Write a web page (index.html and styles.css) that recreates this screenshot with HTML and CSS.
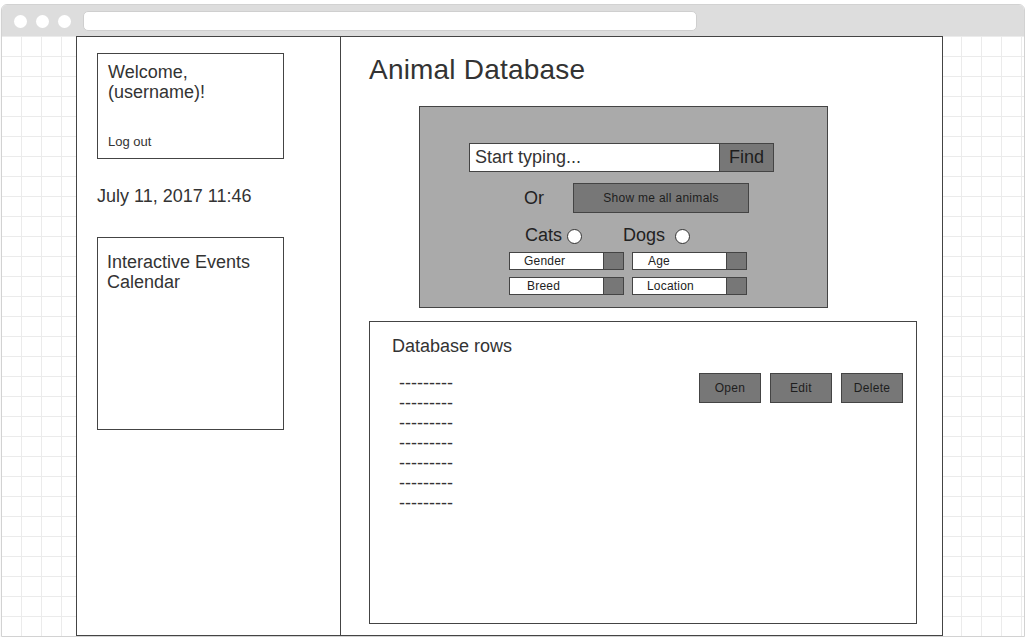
FILE: index.html
```html
<!DOCTYPE html>
<html lang="en">
<head>
<meta charset="utf-8">
<title>Animal Database</title>
<link rel="stylesheet" href="styles.css">
</head>
<body>
<div class="window">
  <div class="chrome">
    <span class="dot"></span><span class="dot"></span><span class="dot"></span>
    <div class="url"></div>
  </div>
  <div class="viewport">
    <div class="page">
      <aside class="sidebar">
        <div class="welcome">
          <div class="welcome-text">Welcome,<br>(username)!</div>
          <a class="logout">Log out</a>
        </div>
        <div class="date">July 11, 2017 11:46</div>
        <div class="calendar">Interactive Events Calendar</div>
      </aside>
      <main class="content">
        <h1 class="title">Animal Database</h1>
        <section class="search-panel">
          <div class="search-row">
            <div class="search-input">Start typing...</div>
            <div class="find-btn">Find</div>
          </div>
          <div class="or-row">
            <span class="or">Or</span>
            <div class="btn show-all">Show me all animals</div>
          </div>
          <div class="species-row">
            <span class="cats">Cats</span><span class="radio radio-cats"></span>
            <span class="dogs">Dogs</span><span class="radio radio-dogs"></span>
          </div>
          <div class="filters">
            <div class="select"><span class="select-label">Gender</span><span class="select-arrow"></span></div>
            <div class="select"><span class="select-label label-age">Age</span><span class="select-arrow"></span></div>
            <div class="select"><span class="select-label label-breed">Breed</span><span class="select-arrow"></span></div>
            <div class="select"><span class="select-label label-location">Location</span><span class="select-arrow"></span></div>
          </div>
        </section>
        <section class="rows-panel">
          <h2 class="rows-title">Database rows</h2>
          <div class="rows-body">
            <ul class="rows">
              <li>---------</li>
              <li>---------</li>
              <li>---------</li>
              <li>---------</li>
              <li>---------</li>
              <li>---------</li>
              <li>---------</li>
            </ul>
            <div class="row-actions">
              <div class="btn action">Open</div>
              <div class="btn action">Edit</div>
              <div class="btn action">Delete</div>
            </div>
          </div>
        </section>
      </main>
    </div>
  </div>
</div>
</body>
</html>
```
FILE: styles.css
```css
* { box-sizing: border-box; }

html, body {
  margin: 0;
  padding: 0;
  background: #ffffff;
}

body {
  font-family: "Liberation Sans", Arial, sans-serif;
  color: #333333;
  overflow: hidden;
}

.window {
  margin: 4px 0 0 1px;
  width: 1024px;
  border: 1px solid #d2d2d2;
  border-radius: 6px 6px 0 0;
  overflow: hidden;
  box-shadow: 0 2px 2px #ececec;
}

.chrome {
  height: 31px;
  background: #dddddd;
  display: flex;
  align-items: center;
  padding-left: 12px;
  padding-top: 1px;
}

.dot {
  width: 13px;
  height: 13px;
  border-radius: 50%;
  background: #ffffff;
  margin-right: 9px;
}

.url {
  margin-left: 3px;
  width: 614px;
  height: 20px;
  background: #ffffff;
  border: 1px solid #cfcfcf;
  border-radius: 5px;
  margin-top: -1px;
}

.viewport {
  height: 600px;
  background-color: #ffffff;
  background-image:
    linear-gradient(to right, #ebebeb 1px, transparent 1px),
    linear-gradient(to bottom, #ebebeb 1px, transparent 1px);
  background-size: 20px 20px;
  background-position: 19px 0;
}

.page {
  margin-left: 74px;
  width: 867px;
  height: 600px;
  background: #ffffff;
  border: 1px solid #444444;
  display: flex;
}

/* Sidebar */
.sidebar {
  width: 264px;
  border-right: 1px solid #444444;
  padding: 16px 0 0 20px;
}

.welcome {
  width: 187px;
  height: 106px;
  border: 1px solid #444444;
  padding: 8px 10px 9px;
  display: flex;
  flex-direction: column;
}

.welcome-text {
  font-size: 18px;
  line-height: 20px;
}

.logout {
  margin-top: auto;
  font-size: 13px;
  line-height: 15px;
}

.date {
  margin-top: 27px;
  font-size: 18px;
  line-height: 20px;
}

.calendar {
  margin-top: 31px;
  width: 187px;
  height: 193px;
  border: 1px solid #444444;
  padding: 14px 9px;
  font-size: 18px;
  line-height: 20px;
}

/* Main content */
.content {
  flex: 1;
  padding: 17px 0 0 28px;
}

.title {
  margin: 0;
  font-size: 28px;
  line-height: 31px;
  font-weight: normal;
  letter-spacing: 0.2px;
  color: #333333;
}

.search-panel {
  margin: 21px 0 0 50px;
  width: 409px;
  height: 202px;
  background: #aaaaaa;
  border: 1px solid #444444;
  padding: 36px 0 0 49px;
  color: #222222;
}

.search-row {
  display: flex;
}

.search-input {
  width: 250px;
  height: 29px;
  background: #ffffff;
  border: 1px solid #444444;
  border-right: none;
  padding-left: 5px;
  font-size: 18px;
  line-height: 27px;
  color: #333333;
}

.find-btn {
  width: 55px;
  height: 29px;
  background: #777777;
  border: 1px solid #444444;
  font-size: 18px;
  line-height: 27px;
  text-align: center;
  color: #1e1e1e;
}

.btn {
  background: #777777;
  border: 1px solid #444444;
  font-size: 12px;
  letter-spacing: 0.3px;
  color: #1e1e1e;
  text-align: center;
  display: flex;
  align-items: center;
  justify-content: center;
}

.or-row {
  margin: 11px 0 0 55px;
  display: flex;
  align-items: center;
}

.or {
  font-size: 18px;
  line-height: 20px;
}

.show-all {
  margin-left: 29px;
  width: 176px;
  height: 30px;
}

.species-row {
  margin: 12px 0 0 56px;
  display: flex;
  align-items: center;
  font-size: 18px;
  line-height: 20px;
}

.radio {
  width: 15px;
  height: 15px;
  border-radius: 50%;
  background: #ffffff;
  border: 1px solid #333333;
  margin-top: 2px;
}

.radio-cats { margin-left: 5px; }
.dogs { margin-left: 41px; }
.radio-dogs { margin-left: 10px; }

.filters {
  margin: 7px 0 0 40px;
  display: grid;
  grid-template-columns: 115px 115px;
  grid-auto-rows: 18px;
  column-gap: 8px;
  row-gap: 7px;
}

.select {
  display: flex;
  background: #ffffff;
  border: 1px solid #444444;
}

.select-label {
  flex: 1;
  padding-left: 14px;
  font-size: 12px;
  line-height: 16px;
  letter-spacing: 0.2px;
  color: #222222;
}

.label-age { padding-left: 15px; }
.label-breed { padding-left: 17px; }
.label-location { padding-left: 14px; }

.select-arrow {
  width: 20px;
  background: #777777;
  border-left: 1px solid #444444;
}

.rows-panel {
  margin-top: 13px;
  width: 548px;
  height: 303px;
  border: 1px solid #444444;
  padding: 14px 13px 0 22px;
}

.rows-title {
  margin: 0;
  font-size: 18px;
  line-height: 20px;
  font-weight: normal;
  color: #333333;
}

.rows-body {
  margin-top: 17px;
  display: flex;
  justify-content: space-between;
  align-items: flex-start;
}

.rows {
  margin: 0;
  padding: 0 0 0 7px;
  list-style: none;
  font-size: 18px;
  line-height: 20px;
  color: #333333;
}

.row-actions {
  display: flex;
  gap: 9px;
}

.action {
  width: 62px;
  height: 30px;
}
```
